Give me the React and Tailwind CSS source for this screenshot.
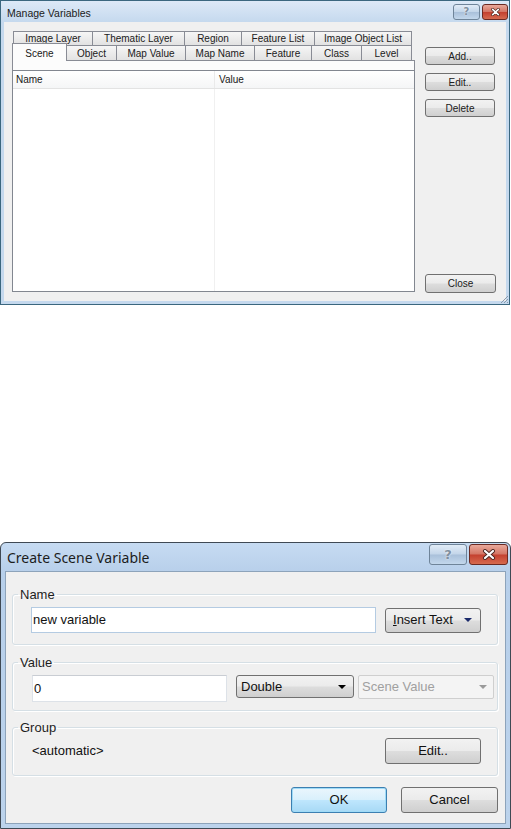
import React from 'react'

const SANS = "font-['Liberation_Sans',Arial,sans-serif]"
const BTN = 'border border-[#707070] rounded-[3px] bg-[linear-gradient(#f2f2f2,#ebebeb_48%,#dddddd_52%,#cfcfcf)]'
const TAB = 'h-full flex items-center justify-center border-t border-[#898c95] bg-[linear-gradient(#f6f6f6,#e2e2e2)]'

const ROW1 = [
  { label: 'Image Layer', w: 'w-[79px]' },
  { label: 'Thematic Layer', w: 'w-[92px]' },
  { label: 'Region', w: 'w-[57px]' },
  { label: 'Feature List', w: 'w-[73px]' },
  { label: 'Image Object List', w: 'w-[98px] border-r' },
]

const ROW2 = [
  { label: 'Object', w: 'w-[49px]' },
  { label: 'Map Value', w: 'w-[69px] border-l' },
  { label: 'Map Name', w: 'w-[69px] border-l' },
  { label: 'Feature', w: 'w-[57px] border-l' },
  { label: 'Class', w: 'w-[50px] border-l' },
  { label: 'Level', w: 'w-[51px] border-l border-r' },
]

function CloseGlyph({ big }) {
  return (
    <svg className={big ? 'w-[14px] h-[11px]' : 'w-[11px] h-[8px]'} viewBox="0 0 14 11">
      <path d="M3 2 L11 9 M11 2 L3 9" stroke="#4a2620" strokeWidth="4" strokeLinecap="round" />
      <path d="M3 2 L11 9 M11 2 L3 9" stroke="#ffffff" strokeWidth="2.2" strokeLinecap="round" />
    </svg>
  )
}

function CaptionButtons({ big }) {
  return (
    <div className={`flex gap-[2px] ${big ? 'mt-[1px]' : 'mt-[3px]'}`}>
      <div className={`${big ? 'w-[38px] h-[21px]' : 'w-[27px] h-[16px]'} rounded-[3px] border border-[#6f8499] bg-[linear-gradient(#e2ecf7,#c3d5e9_48%,#a9c0da_52%,#c3d7ec)] flex items-center justify-center`}>
        <span className={`font-['DejaVu_Sans',sans-serif] font-bold ${big ? 'text-[13px]' : 'text-[10px]'} leading-none text-[#8190a0] [text-shadow:0_0_2px_#ffffff]`}>?</span>
      </div>
      <div className={`${big ? 'w-[39px] h-[21px]' : 'w-[26px] h-[16px]'} rounded-[3px] border border-[#6b2a22] bg-[linear-gradient(#e9a99b,#d47564_48%,#c4402f_52%,#d66a4f)] flex items-center justify-center`}>
        <CloseGlyph big={big} />
      </div>
    </div>
  )
}

function ManageVariables() {
  return (
    <div className={`relative w-[510px] h-[305px] border border-[#3b677f] bg-[#c5d9ee] flex flex-col ${SANS} text-[#202020]`}>
      <div className="h-[21px] flex items-start pl-[6px] pr-[1px] bg-[linear-gradient(#dde9f7,#c5d9ee)]">
        <span className="mt-[6px] text-[10.5px] leading-[13px]">Manage Variables</span>
        <div className="ml-auto">
          <CaptionButtons />
        </div>
      </div>
      <div className="mx-[3px] mb-[3px] flex-1 bg-[#f0f0f0] flex text-[10px]">
        <div className="ml-[8px] mt-[9px] w-[403px] flex flex-col">
          <div className="h-[14px] pl-[1px] flex">
            {ROW1.map(t => (
              <div key={t.label} className={`${t.w} ${TAB} border-l`}>{t.label}</div>
            ))}
          </div>
          <div className="h-[15px] flex items-end">
            <div className="relative z-10 w-[55px] h-[18px] -mb-px border-x border-t border-[#898c95] bg-[#fcfcfc] flex items-start justify-center pt-[2px]">Scene</div>
            {ROW2.map(t => (
              <div key={t.label} className={`${t.w} ${TAB}`}>{t.label}</div>
            ))}
          </div>
          <div className="h-[10px] border-x border-t border-[#898c95] bg-[#fcfcfc]" />
          <div className="h-[222px] border border-[#828790] bg-white flex flex-col">
            <div className="h-[18px] flex border-b border-[#e3e3e3] bg-[linear-gradient(#ffffff,#f5f6f7)]">
              <div className="w-[202px] pl-[3px] flex items-center border-r border-[#eaeaea]">Name</div>
              <div className="pl-[4px] flex items-center">Value</div>
            </div>
            <div className="flex-1 flex">
              <div className="w-[202px] border-r border-[#f0f0f0]" />
            </div>
          </div>
        </div>
        <div className="ml-[10px] pt-[25px] pb-[8px] flex flex-col gap-[8px]">
          <div className={`w-[70px] h-[18px] ${BTN} flex items-center justify-center`}>Add..</div>
          <div className={`w-[70px] h-[18px] ${BTN} flex items-center justify-center`}>Edit..</div>
          <div className={`w-[70px] h-[18px] ${BTN} flex items-center justify-center`}>Delete</div>
          <div className={`mt-auto w-[71px] h-[19px] ${BTN} flex items-center justify-center`}>Close</div>
        </div>
      </div>
      {/* size grip */}
      <svg className="absolute right-0 bottom-0 w-[10px] h-[10px]" viewBox="0 0 10 10">
        <path d="M9 2 L2 9 M9 5 L5 9 M9 8 L8 9" stroke="#8a9aab" strokeWidth="1" />
      </svg>
    </div>
  )
}

function Group({ label, children }) {
  return (
    <fieldset className="ml-[6px] w-[486px] rounded-[3px] border border-[#d5dfe5] shadow-[inset_1px_1px_0_#ffffff,1px_1px_0_#ffffff]">
      <legend className="ml-[5px] px-[2px] leading-[15px] text-[#1e1e1e]">{label}</legend>
      {children}
    </fieldset>
  )
}

function Arrow({ color }) {
  return (
    <svg className="w-[8px] h-[4px]" viewBox="0 0 8 4">
      <path d="M0 0 L8 0 L4 4 Z" fill={color} />
    </svg>
  )
}

function CreateSceneVariable() {
  return (
    <div className="mt-[237px] w-[511px] h-[287px] rounded-t-[6px] border border-[#3f4954] bg-[linear-gradient(#c6dbf2,#b7cfea_30px,#bcd3ec)] flex flex-col">
      <div className="h-[28px] flex items-start pl-[6px] pr-[2px]">
        <span className="mt-[5px] font-['Noto_Sans',sans-serif] text-[14px] leading-[20px] text-[#1c1c1c]">Create Scene Variable</span>
        <div className="ml-auto">
          <CaptionButtons big />
        </div>
      </div>
      <div className={`mx-[4px] mb-[4px] flex-1 border border-[#8da3ba] bg-[#f0f0f0] pt-[15px] ${SANS} text-[13px] text-[#111]`}>
        <Group label="Name">
          <div className="mt-[5px] pl-[18px] pb-[11px] flex items-center gap-[9px]">
            <div className="w-[345px] h-[26px] border border-[#b4cbe2] bg-white flex items-center pl-[1px]">new variable</div>
            <div className={`w-[96px] h-[25px] ${BTN} flex items-center pl-[7px] pr-[8px]`}>
              <span><span className="underline">I</span>nsert Text</span>
              <span className="ml-auto"><Arrow color="#1b2a6b" /></span>
            </div>
          </div>
        </Group>
        <div className="mt-[10px]">
          <Group label="Value">
            <div className="mt-[5px] pl-[19px] pb-[8px] flex items-start">
              <div className="w-[195px] h-[27px] border border-[#dde2e8] border-t-[#c9cdd3] bg-white flex items-center pl-[1px]">0</div>
              <div className={`ml-[9px] w-[118px] h-[23px] ${BTN} flex items-center pl-[4px] pr-[7px]`}>
                <span>Double</span>
                <span className="ml-auto"><Arrow color="#000000" /></span>
              </div>
              <div className="ml-[4px] w-[136px] h-[24px] rounded-[2px] border border-[#cfcfcf] bg-[#f4f4f4] flex items-center pl-[3px] pr-[6px] text-[#a0a0a0]">
                <span>Scene Value</span>
                <span className="ml-auto"><Arrow color="#9a9a9a" /></span>
              </div>
            </div>
          </Group>
        </div>
        <div className="mt-[9px]">
          <Group label="Group">
            <div className="mt-[3px] pl-[19px] pb-[11px] flex items-center">
              <span className="w-[353px]">&lt;automatic&gt;</span>
              <div className={`w-[96px] h-[26px] ${BTN} flex items-center justify-center`}>Edit..</div>
            </div>
          </Group>
        </div>
        <div className="mt-[11px] ml-[6px] w-[486px] flex justify-end gap-[14px]">
          <div className="w-[96px] h-[26px] rounded-[3px] border border-[#3c7fb1] bg-[linear-gradient(#eaf6fd,#d9f0fc_48%,#bee6fd_52%,#a7d9f5)] shadow-[inset_0_0_0_1px_#9fdbf7] flex items-center justify-center">OK</div>
          <div className={`w-[97px] h-[26px] ${BTN} flex items-center justify-center`}>Cancel</div>
        </div>
      </div>
    </div>
  )
}

export default function App() {
  return (
    <div className="w-[511px] h-[829px] bg-white overflow-hidden">
      <ManageVariables />
      <CreateSceneVariable />
    </div>
  )
}
